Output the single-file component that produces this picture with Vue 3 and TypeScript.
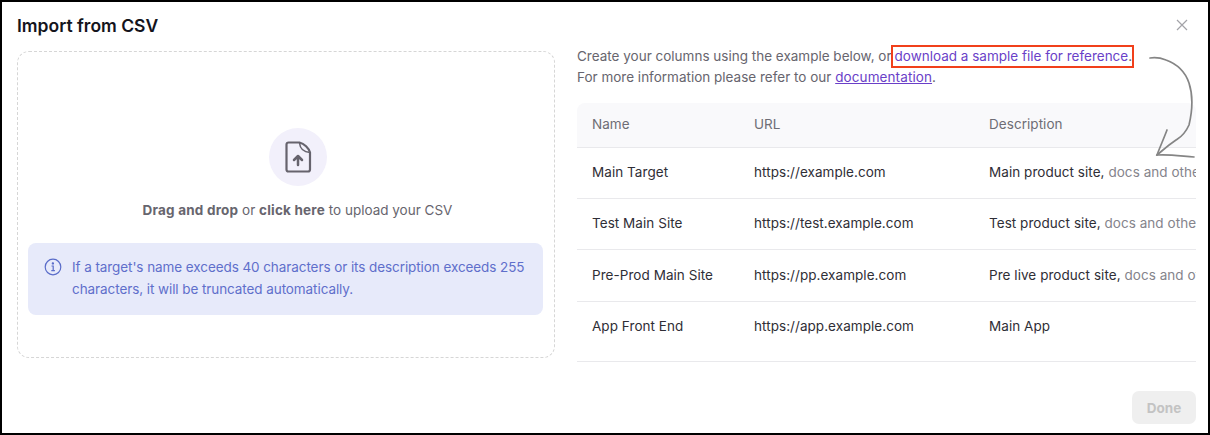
<script setup lang="ts">
interface Row { name: string; url: string; desc: string; rest: string }
const rows: Row[] = [
  { name: 'Main Target', url: 'https://example.com', desc: 'Main product site,', rest: ' docs and other resources' },
  { name: 'Test Main Site', url: 'https://test.example.com', desc: 'Test product site,', rest: ' docs and other resources' },
  { name: 'Pre-Prod Main Site', url: 'https://pp.example.com', desc: 'Pre live product site,', rest: ' docs and other resources' },
  { name: 'App Front End', url: 'https://app.example.com', desc: 'Main App', rest: '' },
]
</script>

<template>
  <div class="frame">
    <header class="head">
      <h1>Import from CSV</h1>
      <svg class="close" width="12" height="12" viewBox="0 0 12 12" fill="none" stroke="#a3a3a8" stroke-width="1.2">
        <path d="M1 1l10 10M11 1L1 11" />
      </svg>
    </header>
    <div class="body">
      <section class="drop">
        <div class="circle">
          <svg width="30" height="34" viewBox="0 0 30 34" fill="none" stroke="#66636d" stroke-width="2.2" stroke-linejoin="round" stroke-linecap="round">
            <path d="M5.5 2.500H16.500C21 3.500 26 8 27 12.500V29.500a2 2 0 0 1-2 2H5.500a2 2 0 0 1-2-2V4.500a2 2 0 0 1 2-2z" />
            <path d="M16.500 3C17 8 20 12 27 12.500" stroke-width="1.500" />
            <path d="M15 25V16.500M11 20l4-4 4 4" stroke-width="2.500" />
          </svg>
        </div>
        <p class="hint"><b>Drag and drop</b> or <b>click here</b> to upload your CSV</p>
        <div class="note">
          <svg class="info" width="18" height="18" viewBox="0 0 18 18" fill="none" stroke="#5a6cc9" stroke-width="1.200">
            <circle cx="9" cy="9" r="7.800" />
            <path d="M7.500 8h1.700v4.500M7.300 12.700h3.600" />
            <circle cx="8.900" cy="5.400" r=".6" fill="#5a6cc9" />
          </svg>
          <p>If a target's name exceeds 40 characters or its description exceeds 255 characters, it will be truncated automatically.</p>
        </div>
      </section>
      <section class="side">
        <p class="intro">Create your columns using the example below, or<span class="mark"><a>download a sample file for reference</a>.</span><br />For more information please refer to our <a class="ul">documentation</a>.</p>
        <div class="tableWrap">
          <div class="row th">
            <div>Name</div><div>URL</div><div>Description</div>
          </div>
          <div v-for="r in rows" :key="r.name" class="row">
            <div>{{ r.name }}</div>
            <div>{{ r.url }}</div>
            <div>{{ r.desc }}<span class="dim">{{ r.rest }}</span></div>
          </div>
          <svg class="arrow" width="50" height="106" viewBox="0 0 50 106" fill="none" stroke="#858585" stroke-width="1.700" stroke-linecap="round">
            <path d="M3 2C9 1 14 2 19 4C30 8 38 15 42 27C46 39 46 52 42 69C37 80 32 82 29 84C20 90 15 95 10 99" />
            <path d="M20 74C17 82 13 91 10 99C21 98 34 100 47 101" />
          </svg>
        </div>
      </section>
    </div>
    <footer class="foot"><button disabled>Done</button></footer>
  </div>
</template>

<style scoped>
.frame {
  box-sizing: border-box;
  width: 1210px;
  height: 435px;
  border: 2px solid #000;
  background: #fff;
  font-family: Inter, "Noto Sans", sans-serif;
  font-size: 13.500px;
  color: #2f2e36;
  display: flex;
  flex-direction: column;
  overflow: hidden;
}
.head {
  display: flex;
  justify-content: space-between;
  align-items: center;
  padding: 10px 20px 0 15px;
  height: 36px;
  box-sizing: border-box;
}
h1 { margin: 0; font-size: 17.500px; font-weight: 600; color: #14141c; }
.body {
  display: flex;
  gap: 22px;
  padding: 13px 12px 0 15px;
  height: 309px;
  box-sizing: border-box;
}
.drop {
  box-sizing: border-box;
  width: 538px;
  flex: none;
  height: 307px;
  border: 1px dashed #d6d6d6;
  border-radius: 12px;
  padding: 76px 10px 0;
  display: flex;
  flex-direction: column;
  align-items: center;
}
.circle {
  width: 58px;
  height: 58px;
  margin-left: 23px;
  border-radius: 50%;
  background: #f2f0fb;
  display: flex;
  align-items: center;
  justify-content: center;
}
.hint { margin: 14px 0 0 23px; color: #67656e; line-height: 20px; }
.hint b { font-weight: 700; letter-spacing: .2px; }
.note {
  box-sizing: border-box;
  align-self: flex-start;
  width: 515px;
  height: 72px;
  margin-top: 23px;
  background: #e7eafa;
  border-radius: 8px;
  padding: 13px 16px;
  display: flex;
  gap: 10px;
  color: #5f6fcb;
  letter-spacing: -.08px;
}
.note p { margin: 0; line-height: 22px; }
.info { flex: none; margin-top: 2px; }
.side { width: 619px; flex: none; }
.intro { margin: -5px 0 0; color: #67656e; line-height: 21px; height: 42px; }
.mark { outline: 2px solid #f1401b; padding: 1px 0 2px 2px; margin-left: 1px; }
a { color: #6a3fc8; }
.ul { text-decoration: underline; letter-spacing: .1px; }
.tableWrap { position: relative; margin-top: 15px; }
.row {
  display: grid;
  grid-template-columns: 162px 235px 1fr;
  height: 51px;
  align-items: center;
  padding-left: 15px;
  border-bottom: 1px solid #e9e9ec;
  white-space: nowrap;
  overflow: hidden;
  box-sizing: border-box;
  letter-spacing: .05px;
}
.row:nth-child(2), .row:nth-child(3), .row:nth-child(4) { padding-bottom: 2px; }
.row:nth-child(4) { height: 52px; }
.row:last-of-type { height: 60px; padding-bottom: 12px; }
.th {
  height: 45px;
  padding-bottom: 2px;
  background: #f9f9fb;
  border-radius: 8px 8px 0 0;
  color: #6e6d75;
}
.dim { color: #85848c; }
.arrow { position: absolute; right: -1px; top: -47px; }
.foot {
  display: flex;
  justify-content: flex-end;
  padding: 44px 12px 0 0;
}
button {
  width: 64px;
  height: 33px;
  border: 0;
  border-radius: 7px;
  background: #efefef;
  color: #c3c3c3;
  font: 700 13.500px Inter, sans-serif;
}
</style>
